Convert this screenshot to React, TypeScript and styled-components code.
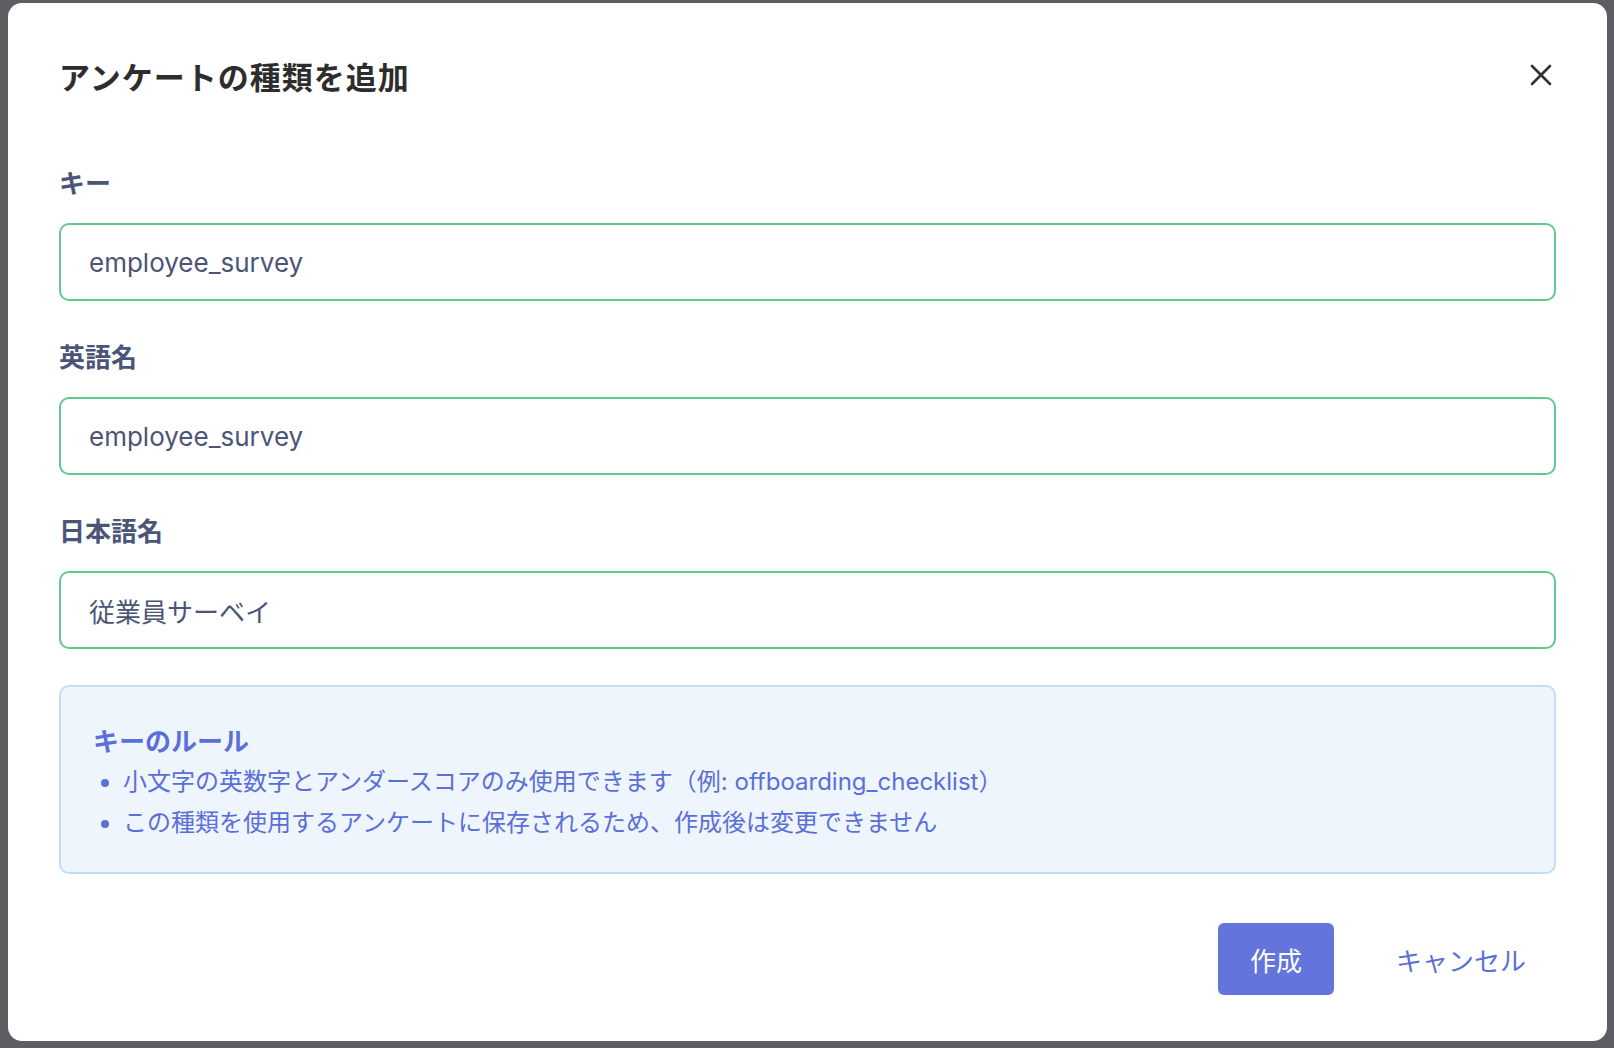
import React from "react";
import styled, { createGlobalStyle } from "styled-components";

const Global = createGlobalStyle`
  html, body { margin: 0; padding: 0; background: #5e5e62; }
  body { font-family: Inter, "Noto Sans CJK JP", sans-serif; }
`;

const Backdrop = styled.div`
  width: 1614px; height: 1048px; box-sizing: border-box;
  padding: 3px 7px 7px 8px; background: #5e5e62;
`;
const Modal = styled.div`
  background: #fff; border-radius: 14px; height: 100%; box-sizing: border-box;
  padding: 52px 51px 0 51px; display: flex; flex-direction: column;
`;
const Header = styled.div`
  display: flex; justify-content: space-between; align-items: center; height: 40px;
`;
const Title = styled.h1`
  margin: 0; font-size: 31px; font-weight: 700; color: #2d2d2d; letter-spacing: 1px;
  font-family: "Noto Sans CJK JP", sans-serif;
`;
const Close = styled.button`
  border: none; background: none; padding: 0; margin-right: 4px; cursor: pointer; display: flex;
`;
const Field = styled.div`
  display: flex; flex-direction: column; margin-top: ${p => p.$top}px;
`;
const Label = styled.label`
  font-size: 26px; font-weight: 700; color: #4a5578; height: 34px; line-height: 34px;
  font-family: "Noto Sans CJK JP", sans-serif; margin-bottom: 24px;
`;
const Input = styled.input`
  height: 78px; box-sizing: border-box; border: 2px solid #5ecb8c; border-radius: 10px;
  padding: 0 28px; font-size: 26px; color: #4b5577; outline: none;
  font-family: Inter, "Noto Sans CJK JP", sans-serif;
`;
const Info = styled.div`
  margin-top: 36px; height: 189px; box-sizing: border-box; background: #eef5fd;
  border: 2px solid #c4dcf6; border-radius: 10px; padding: 36px 32px 0;
  color: #5b6fd8; font-family: Inter, "Noto Sans CJK JP", sans-serif;
`;
const InfoTitle = styled.div`
  font-size: 26px; font-weight: 700; line-height: 34px;
  font-family: "Noto Sans CJK JP", sans-serif;
`;
const List = styled.ul`
  margin: 4px 0 0; padding-left: 30px; font-size: 24px; line-height: 41px;
`;
const Footer = styled.div`
  display: flex; justify-content: flex-end; align-items: center; gap: 62px;
  margin-top: 49px; padding-right: 30px;
`;
const Primary = styled.button`
  width: 116px; height: 72px; border: none; border-radius: 6px; background: #6375dc;
  color: #fff; font-size: 26px; font-family: "Noto Sans CJK JP", sans-serif;
`;
const Ghost = styled.button`
  border: none; background: none; color: #5b6fd8; font-size: 26px; padding: 0;
  font-family: "Noto Sans CJK JP", sans-serif;
`;

export default function App() {
  return (
    <>
      <Global />
      <Backdrop>
        <Modal>
          <Header>
            <Title>アンケートの種類を追加</Title>
            <Close aria-label="close">
              <svg width="22" height="22" viewBox="0 0 22 22">
                <path d="M2 2L20 20M20 2L2 20" stroke="#333" strokeWidth="2.6" strokeLinecap="round" />
              </svg>
            </Close>
          </Header>
          <Field $top={70}>
            <Label>キー</Label>
            <Input defaultValue="employee_survey" />
          </Field>
          <Field $top={38}>
            <Label>英語名</Label>
            <Input defaultValue="employee_survey" />
          </Field>
          <Field $top={38}>
            <Label>日本語名</Label>
            <Input defaultValue="従業員サーベイ" />
          </Field>
          <Info>
            <InfoTitle>キーのルール</InfoTitle>
            <List>
              <li>小文字の英数字とアンダースコアのみ使用できます（例: offboarding_checklist）</li>
              <li>この種類を使用するアンケートに保存されるため、作成後は変更できません</li>
            </List>
          </Info>
          <Footer>
            <Primary>作成</Primary>
            <Ghost>キャンセル</Ghost>
          </Footer>
        </Modal>
      </Backdrop>
    </>
  );
}
